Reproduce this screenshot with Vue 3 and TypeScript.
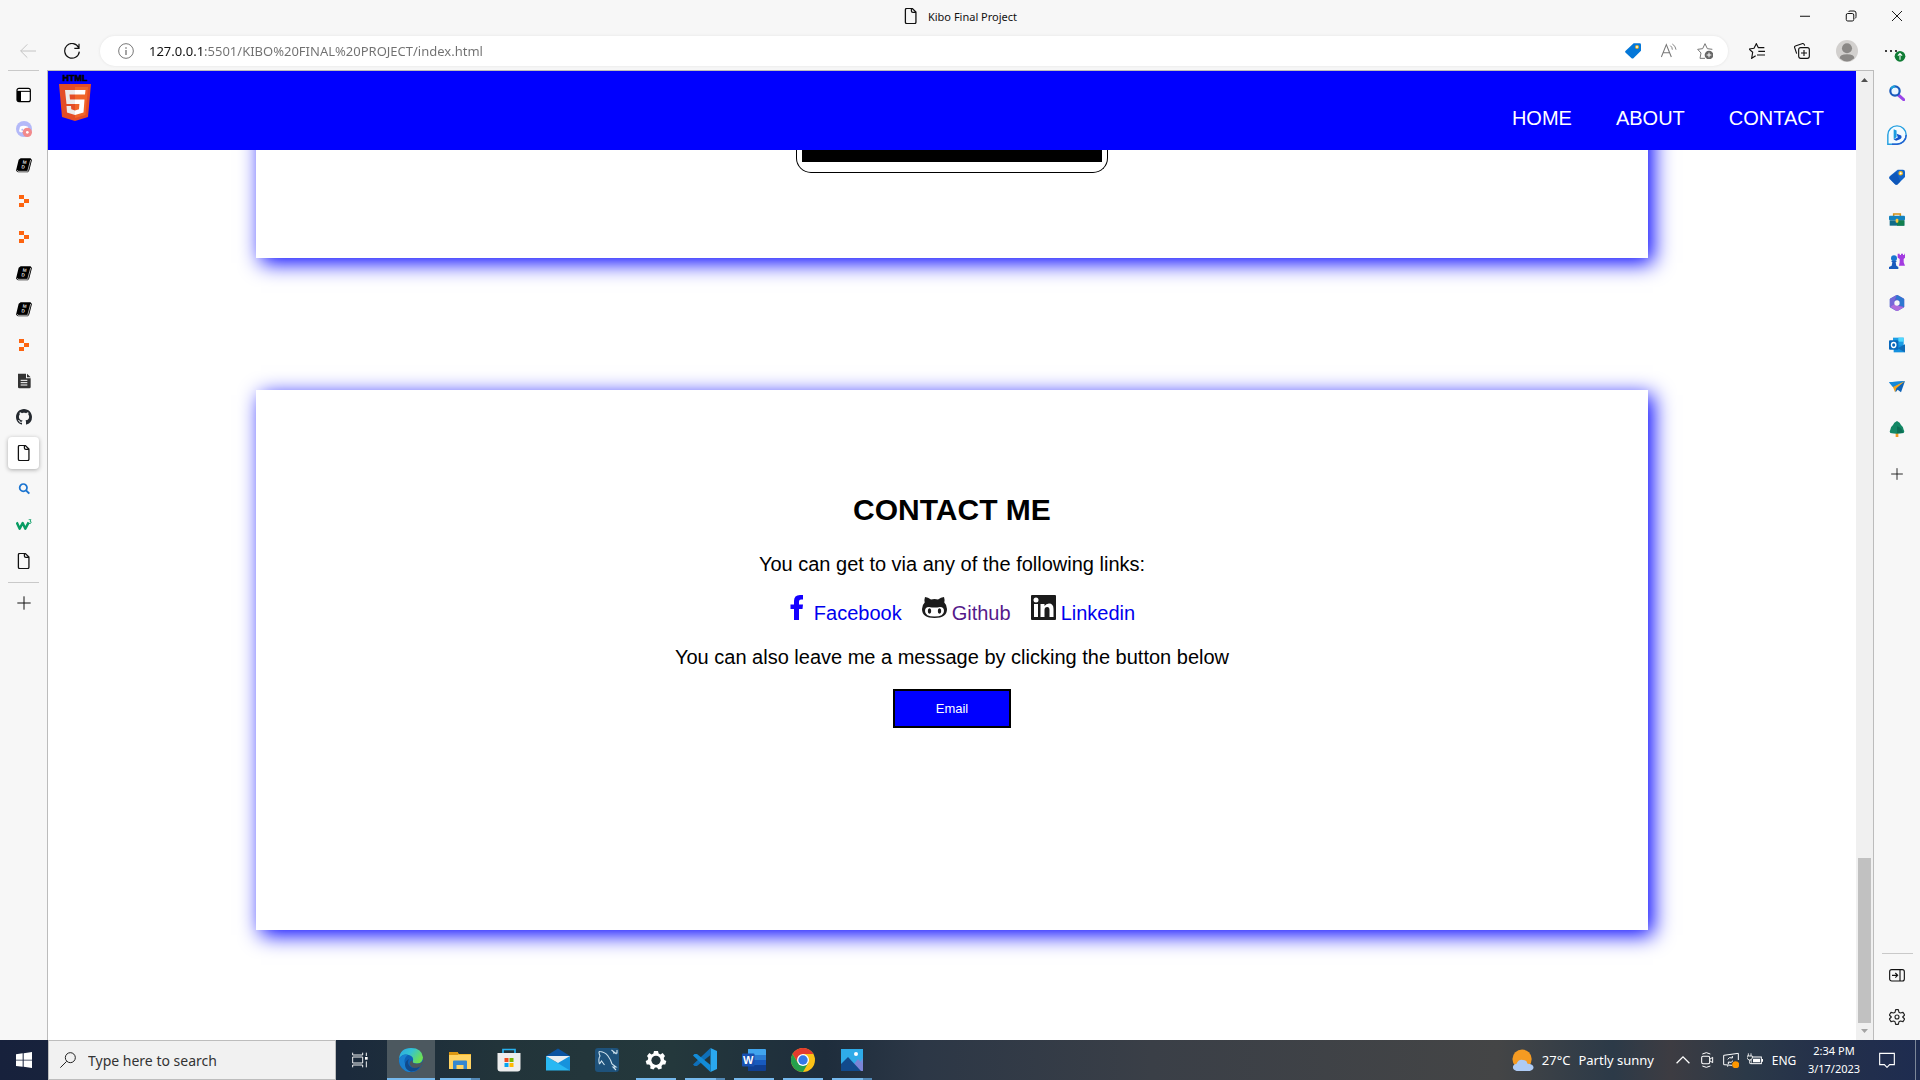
<script setup lang="ts">
import { ref } from 'vue'

interface Tile {
  label: string
  icon: string
}
interface TabTile extends Tile {
  active?: boolean
}
interface Task extends Tile {
  state?: 'active' | 'open' | 'stack'
}

const file =
  '<path d="M6.5 .5h7l5 5.500v15.500a2 2 0 0 1-2 2h-10a2 2 0 0 1-2-2v-19a2 2 0 0 1 2-2zM12.500 .5v4a2 2 0 0 0 2 2h4" transform="translate(-1.500 0) scale(1.130 1)" fill="none" stroke="#111" stroke-width="1.700"/>'
const book =
  '<path d="M7 2h15.500l-.5 1 2 1-4 16-2 3H3l-3-2.500L4 4z" fill="#000"/><path d="M1.500 19.500l1.500 2h14.500l4.500-17" fill="none" stroke="#fff" stroke-width="1"/><g fill="#ddd" font-family="Liberation Sans" font-weight="700" font-size="7"><text x="10" y="10" transform="rotate(8 12 8)">M</text><text x="8" y="17" transform="rotate(8 10 15)">D</text></g>'
const replit =
  '<path d="M4.500 3H12v6H4.500zM12 9h7.500v6H12zM4.500 15H12v6H4.500z" fill="#fd6410"/>'

const icons: Record<string, string> = {
  file,
  book,
  replit,
  panel:
    '<rect x="1.500" y="2" width="20" height="20" rx="3" fill="#fff" stroke="#000" stroke-width="1.800"/><path d="M1.500 6h6v16h-3a3 3 0 0 1-3-3z"/><path d="M2 6.500h19.500" stroke="#000" stroke-width="1.500"/>',
  discord:
    '<circle cx="12" cy="12" r="12" fill="#b4b9f8"/><path d="M6 8.500q5-3 12 0l1.500 7q-3 2.500-5 1h-5q-2 1.500-5-1z" fill="#fff"/><circle cx="9.500" cy="13" r="1.500" fill="#b4b9f8"/><circle cx="17" cy="17" r="7" fill="#f28a8c"/><circle cx="17" cy="17" r="2" fill="#fff"/>',
  doc:
    '<path d="M3 1h12v7h7v13a2 2 0 0 1-2 2H5a2 2 0 0 1-2-2zM16.500 1L22 6.500h-5.500z" fill="#333"/><path d="M7 11h10M7 14.500h10M7 18h10" stroke="#fff" stroke-width="1.500"/>',
  github:
    '<path transform="scale(1.5)" fill="#24292f" d="M8 0C3.580 0 0 3.580 0 8c0 3.540 2.290 6.530 5.470 7.590.4.070.55-.17.55-.38 0-.19-.01-.82-.01-1.490-2.010.37-2.530-.49-2.690-.94-.09-.23-.48-.94-.82-1.130-.28-.15-.68-.52-.01-.53.63-.01 1.080.58 1.230.82.720 1.210 1.870.87 2.330.66.070-.52.28-.87.510-1.070-1.780-.2-3.640-.89-3.640-3.950 0-.87.310-1.590.820-2.150-.08-.2-.36-1.020.08-2.120 0 0 .67-.21 2.200.82.640-.18 1.320-.27 2-.27s1.360.09 2 .27c1.530-1.040 2.200-.82 2.200-.82.440 1.100.16 1.920.08 2.120.510.56.820 1.270.820 2.150 0 3.070-1.870 3.750-3.650 3.950.29.25.54.73.54 1.480 0 1.070-.01 1.930-.01 2.200 0 .21.15.46.55.38A8.010 8.010 0 0 0 16 8c0-4.420-3.580-8-8-8z"/>',
  find:
    '<circle cx="11" cy="10" r="5.500" fill="none" stroke="#1b74d0" stroke-width="2.600"/><path d="M15 14l5 5" stroke="#1b74d0" stroke-width="3"/>',
  w3:
    '<path d="M1 8l4.500 9.500L10 9l4 8.500L19 8" fill="none" stroke="#089c63" stroke-width="3.700" stroke-linejoin="round"/><path d="M19 4h3.500l-1.500 2.500q2.500 0 1.500 2.500-1 1.500-3.500.5" fill="none" stroke="#089c63" stroke-width="1.200"/>',
  plus: '<path d="M12 2v20M2 12h20" stroke="#111" stroke-width="1.500"/>',
  back: '<path d="M24 12H1M11 2L1 12l10 10" fill="none" stroke="#c4c4c4" stroke-width="1.500"/>',
  reload:
    '<path d="M22 7A11 11 0 1 0 23 13M22.500 1v7h-7" fill="none" stroke="#111" stroke-width="1.800"/>',
  info:
    '<circle cx="12" cy="12" r="11" fill="none" stroke="#777" stroke-width="1.500"/><path d="M12 10.500V18M12 6.500v2" stroke="#777" stroke-width="2"/>',
  tag:
    '<path d="M13 .5h9a2 2 0 0 1 2 2v9L13 22.500a2.500 2.500 0 0 1-3.500 0l-8.500-8a2 2 0 0 1 0-3z" fill="#0477d8"/><circle cx="18" cy="6" r="2.200" fill="#fff" stroke="#e0ab1c" stroke-width="1.600"/>',
  aloud:
    '<path d="M.5 21L8 2.500 15.500 21M3.500 14.500h9" fill="none" stroke="#777" stroke-width="1.600"/><path d="M14 4q3 2 3 6M17 1.500q5 3 5.500 8.500" fill="none" stroke="#777" stroke-width="1.400"/>',
  staradd:
    '<path d="M12 23l-7.500 0 1.500-8L1 9.500l7.500-1L12 1l3.500 7.500 7.500 1" fill="none" stroke="#777" stroke-width="1.500"/><circle cx="18" cy="18" r="6.500" fill="#686868"/><path d="M18 14.500v7M14.500 18h7" stroke="#fff" stroke-width="1.500"/>',
  favs:
    '<path d="M10 19l-6 4 1.500-9L0 9l7.500-1L11 1l3 6h9M14 12.500h10M12 18h12" fill="none" stroke="#111" stroke-width="1.700"/>',
  collect:
    '<rect x="7" y="7" width="16" height="16" rx="3" fill="none" stroke="#111" stroke-width="1.700"/><path d="M15 10.500v9M10.500 15h9M4 16L1 7q-1-2 2-3l9-3q3-1 4 3" fill="none" stroke="#111" stroke-width="1.700"/>',
  person:
    '<circle cx="12" cy="12" r="12" fill="#d2d0ce"/><circle cx="12" cy="9" r="5.500" fill="#8a8886"/><path d="M4 20q0-4.500 8-4.500t8 4.500q-8 7-16 0z" fill="#8a8886"/>',
  more:
    '<g fill="#111"><circle cx="3" cy="12" r="1.600"/><circle cx="10.500" cy="12" r="1.600"/><circle cx="18" cy="12" r="1.600"/></g><circle cx="24" cy="20" r="8" fill="#107c35"/><path d="M24 25v-9M20.800 19l3.200-3.200 3.200 3.200" fill="none" stroke="#fff" stroke-width="1.600"/>',
  minimize: '<path d="M2 12.500h20" stroke="#111" stroke-width="2"/>',
  restore:
    '<rect x="2.500" y="7" width="15" height="15" rx="3" fill="none" stroke="#111" stroke-width="2"/><path d="M7 4q1-2 3-2h8q4 0 4 4v7q0 3-2 4" fill="none" stroke="#111" stroke-width="2"/>',
  close: '<path d="M2 2l20 20M22 2L2 22" stroke="#111" stroke-width="1.900"/>',
  search:
    '<path d="M14 15l8 7" stroke="#9a45e8" stroke-width="4.500" stroke-linecap="round"/><circle cx="9" cy="9" r="7" fill="#eaf6ff" stroke="#185abd" stroke-width="3.300"/><path d="M3 5.500A7 7 0 0 1 9 2" fill="none" stroke="#1ca2dc" stroke-width="3.300"/>',
  bing:
    '<path d="M1 23V12A11 11 0 1 1 12 23z" fill="#f3fbff" stroke="#249fe0" stroke-width="1.700"/><path d="M23 12A11 11 0 0 1 12 23H6" fill="none" stroke="#2460d0" stroke-width="1.700"/><path d="M8 5l3.500 1.500v8L8 17.500z" fill="#1a9de0"/><path d="M8 17.500l5-2.500-1.500-4.500 5.500 2q1.500 3-1.500 4.500L11 19z" fill="#1455cc"/>',
  coupon:
    '<path d="M13 1h8a3 3 0 0 1 3 3v8L13 23q-2 1.500-4 0L1 15q-1.500-2 0-4z" fill="#1265cc"/><path d="M0 13l11-9 6 15-5 5q-2 0-4-2z" fill="#0b4fae" opacity=".6"/><circle cx="17.500" cy="6.500" r="2.500" fill="#fff" stroke="#fbb917" stroke-width="1.800"/>',
  tools:
    '<path d="M7 8V4.500h10V8" fill="none" stroke="#d59015" stroke-width="2.300"/><rect y="7" width="24" height="7" rx="1.500" fill="#1382be"/><path d="M1 14h22v8H1z" fill="#116b87"/><path d="M12 14h11v8H12z" fill="#12804e"/><rect x="10" y="11.500" width="4" height="6" rx="1.500" fill="#ffc93b"/>',
  games:
    '<path d="M13 1h3v2h2V1h3v2h2V1h1v6l-2 2v5l2 5h-9l1-5V9l-3-2z" fill="#a33be0"/><circle cx="7.500" cy="8" r="4.500" fill="#1876d0"/><path d="M3 12h9l-2 2 1 5 3 2v3H0v-3l4-2 1-5z" fill="#185abd"/>',
  m365:
    '<path d="M12 0l10.500 6v12L12 24 1.500 18V6z" fill="#5360cf" stroke="#5360cf" stroke-width="1" stroke-linejoin="round"/><path d="M12 0l10.500 6v12.500L16 15V9l-6-4z" fill="#2e78d0"/><path d="M1.500 17.500l7-4.500 6 3.500 8 1.500L12 24.300z" fill="#b06ddd"/><path d="M1.500 6v12l7-5V8l3-7.500z" fill="#7668d8"/><circle cx="12" cy="12" r="4" fill="#f7f7f7"/>',
  outlook:
    '<path d="M6 1h16v13H6z" fill="#1c9de5"/><path d="M14 1h8v6h-8z" fill="#50d9ff"/><path d="M7 12l17 0v11H7z" fill="#1490df"/><path d="M24 11v12l-11-6z" fill="#126bb5"/><rect y="5" width="14" height="14" rx="1.500" fill="#0868bc"/><ellipse cx="7" cy="12" rx="3.300" ry="3.700" fill="none" stroke="#fff" stroke-width="2"/>',
  drop:
    '<path d="M0 5l24-2-17 10z" fill="#1e86dc"/><path d="M24 3L8 13l2 7 3-4 5 4z" fill="#0e63b8"/><path d="M0 5l24-2L6 12z" fill="#1689d8"/><path d="M24 3L6 12l3 8 2-6z" fill="#f6a51c"/>',
  tree:
    '<path d="M10 17h4v7h-4z" fill="#f29a20"/><path d="M12 0q5 2 6 6 4 3 4 7 2 2 0 5-10 2-20 0-2-2 0-5 0-4 4-7 1-4 6-6z" fill="#138765"/><path d="M12 8q8 2 9 10h-9z" fill="#0b6f54"/>',
  sidepanel:
    '<rect x="1" y="4" width="22" height="17" rx="3" fill="none" stroke="#111" stroke-width="1.700"/><path d="M16.500 4v17M4.500 12.500h8M9.500 9l3.500 3.500L9.500 16" fill="none" stroke="#111" stroke-width="1.700"/>',
  cog:
    '<path d="M10 1h4l1 4 2 1 4-1 2.500 4-3 3 3 3-2.500 4-4-1-2 1-1 4h-4l-1-4-2-1-4 1L.5 15l3-3-3-3L3 5l4 1 2-1z" fill="none" stroke="#222" stroke-width="1.700" stroke-linejoin="round"/><circle cx="12" cy="12" r="3" fill="none" stroke="#222" stroke-width="1.700"/>',
  windows:
    '<path d="M0 3.500l10-1.500v9.500H0zM11.500 1.800L24 0v11.500H11.500zM0 12.800h10v9.500L0 21zM11.500 12.800H24V24l-12.500-1.700z" fill="#fff"/>',
  lens:
    '<circle cx="15.500" cy="8.500" r="7.500" fill="none" stroke="#222" stroke-width="1.500"/><path d="M10 14L.5 23.500" stroke="#222" stroke-width="1.500"/>',
  taskview:
    '<path d="M1 1v3.500h15V1M1 23v-3.500h15V23M1 7.500h15v9H1zM21.500 1v5M21.500 14v9" fill="none" stroke="#fff" stroke-width="1.400"/><path d="M19.500 7.500h4v4h-4z" fill="#fff"/>',
  edge:
    '<defs><linearGradient id="eg" x1="0" y1="0" x2="1" y2=".5"><stop offset="0" stop-color="#2aa8e4"/><stop offset=".5" stop-color="#35c3d2"/><stop offset="1" stop-color="#6ee052"/></linearGradient></defs><circle cx="12" cy="12" r="12" fill="#0d62b7"/><path d="M0 11Q1 0 12 0q11 0 12 9.500-.5 6-6 6-5 0-4-2.500 1-4.500-4-6Q3 5 0 11z" fill="url(#eg)"/><path d="M0 11Q3 6 9 6.700q-6 5-2 11 4 5.500 9 5.500Q8 26 3 20q-3.500-4-3-9z" fill="#1a80cf"/><path d="M13.500 12q-1 4 4.500 3.800 4 0 6-2.800l0 2-3 4.500q-7 2.500-10-2.500-1.500-3 2.500-5z" fill="#4d565c"/><path d="M10 11q-2.500 4 1 7.500 4 3 10 0-3 5-9 5.200-6-2-6-7 .5-4 4-5.700z" fill="#114a8b"/>',
  explorer:
    '<path d="M1 4h8l2 2h12v15H1z" fill="#f8b82a"/><path d="M1 4h9v3H1z" fill="#dc9711"/><path d="M1 7h22v14H1z" fill="#ffd363"/><path d="M5 13.500q0-1 1-1h12q1 0 1 1v7.500h-3.500v-4h-7v4H5z" fill="#3487d1"/>',
  store:
    '<path d="M6 7V1.500h12V7" fill="none" stroke="#28b2f0" stroke-width="1.700"/><path d="M.5 5h23v15.500a3 3 0 0 1-3 3h-17a3 3 0 0 1-3-3z" fill="#eee"/><path d="M7.500 10h4v4h-4z" fill="#f04c20"/><path d="M12.500 10h4v4h-4z" fill="#7bb900"/><path d="M7.500 15h4v4h-4z" fill="#04a4ef"/><path d="M12.500 15h4v4h-4z" fill="#ffb900"/>',
  mail:
    '<path d="M0 8l12-7.500L24 8v3H0z" fill="#0a52a0"/><path d="M0 8l12 7 12-7v14.500H0z" fill="#29b8f2"/><path d="M24 8v14.500L10 14z" fill="#1792dc"/><path d="M0 8h24l-12 7z" fill="#e8edf1"/>',
  mysql:
    '<rect width="24" height="24" rx="3" fill="#1e527b"/><path d="M4.500 16Q3 11 5 8q-2-5 0-4.500 5 .5 8 4.500 3 4 4 8l4 3-3 0 3 3M4.500 16l2-3 3 4M16.500 2l5 4M18 5h4V2" fill="none" stroke="#cfe3ee" stroke-width="1.100"/>',
  gear:
    '<path d="M10 3h4l.6 2.600 1.800.8L18.700 5 21 8l-1.300 2 .6 2 2 1-1 3.500-2.500 0-1.300 1.500.3 2.500-3.300 1-1.500-2h-2l-1.500 2-3.300-1 .3-2.500-1.300-1.500-2.500 0-1-3.500 2-1 .6-2L3 8l2.300-3 2.300 1.400 1.800-.8z" fill="#fff"/><circle cx="12" cy="12.300" r="4.600" fill="#22343a"/>',
  code:
    '<path d="M17.500 0L24 3v18l-6.500 3z" fill="#2aa8ef"/><path d="M17.500 0v7L4 18l-2.500 0L0 16.500z" fill="#0f6fb8"/><path d="M17.500 24v-7L4 6 1.500 6 0 7.500z" fill="#138cd8"/>',
  word:
    '<path d="M6 1h17a1 1 0 0 1 1 1v5H6z" fill="#41a5ee"/><path d="M6 7h18v5H6z" fill="#2b7cd3"/><path d="M6 12h18v5H6z" fill="#185abd"/><path d="M6 17h18v5a1 1 0 0 1-1 1H6z" fill="#103f91"/><rect y="5.500" width="12.500" height="13" rx="1" fill="#1850b0"/><text x="6.200" y="16" text-anchor="middle" font-family="Liberation Sans" font-weight="700" font-size="11" fill="#fff">W</text>',
  chrome:
    '<circle cx="12" cy="12" r="12" fill="#fbc116"/><path d="M1.600 6A12 12 0 0 1 22.400 6H12L7 15z" fill="#e33b2e"/><path d="M1.600 6A12 12 0 0 0 12 24l5.200-9H7z" fill="#25a04c"/><circle cx="12" cy="12" r="6" fill="#fff"/><circle cx="12" cy="12" r="4.700" fill="#3478e5"/>',
  photos:
    '<path d="M1 1h22v22H1z" fill="#2fabe8"/><path d="M23 10v13H13z" fill="#6e8fdc"/><path d="M14 16l4-5 5 5v7h-9z" fill="#7b84d6"/><path d="M1 16l7-7 13 14H1z" fill="#124a8c"/><circle cx="16" cy="6" r="2" fill="#fff"/>',
  weather:
    '<circle cx="11" cy="11" r="10.500" fill="#f59b22"/><path d="M5 24q-4-1-4-4 0-3.500 4-4 2-5 7-4 4 0 5 4 6 0 6.500 4 0 3-4 4z" fill="#aecbf5"/>',
  chevron: '<path d="M1 17.500L12 6.500l11 11" fill="none" stroke="#fff" stroke-width="2.200"/>',
  meet:
    '<rect x="4" y="6.500" width="12" height="11" rx="2" fill="none" stroke="#fff" stroke-width="1.600"/><path d="M16 11l4.500-3v8L16 13M5 3q6-4 12 0M5 21q6 4 12 0" fill="none" stroke="#fff" stroke-width="1.500"/>',
  sync:
    '<path d="M14 20L1 19V5l22-3v10M7 20v2" fill="none" stroke="#fff" stroke-width="1.500"/><path d="M7 11q2-4 7-2V6M15 13q-2 4-7 2v3" fill="none" stroke="#fff" stroke-width="1.500"/><circle cx="19" cy="19" r="5.300" fill="#ff9800"/>',
  battery:
    '<rect x="6" y="7.500" width="15.500" height="10" fill="none" stroke="#fff" stroke-width="1.500"/><path d="M9 10h10.500v5.500H9zM22 10.500h2v4h-2z" fill="#fff"/><path d="M2 2v4M6 2v4M0 6h8v3q-1 3-4 3t-4-3zM4 12v5h3" fill="#26343e" stroke="#fff" stroke-width="1.300"/>',
  notice:
    '<path d="M1 2h22v17h-7l-4 4-4-4H1z" fill="none" stroke="#fff" stroke-width="1.700"/>',
}

const tabs: TabTile[] = [
  { label: 'Discord', icon: 'discord' },
  { label: 'Course notes', icon: 'book' },
  { label: 'Replit', icon: 'replit' },
  { label: 'Replit project', icon: 'replit' },
  { label: 'Lesson', icon: 'book' },
  { label: 'Assignment', icon: 'book' },
  { label: 'Replit workspace', icon: 'replit' },
  { label: 'Document', icon: 'doc' },
  { label: 'GitHub', icon: 'github' },
  { label: 'Kibo Final Project', icon: 'file', active: true },
  { label: 'Search results', icon: 'find' },
  { label: 'W3Schools', icon: 'w3' },
  { label: 'Untitled', icon: 'file' },
]

const apps: Tile[] = [
  { label: 'Search', icon: 'search' },
  { label: 'Bing', icon: 'bing' },
  { label: 'Shopping', icon: 'coupon' },
  { label: 'Tools', icon: 'tools' },
  { label: 'Games', icon: 'games' },
  { label: 'Microsoft 365', icon: 'm365' },
  { label: 'Outlook', icon: 'outlook' },
  { label: 'Drop', icon: 'drop' },
  { label: 'E-tree', icon: 'tree' },
]

const tasks: Task[] = [
  { label: 'Edge', icon: 'edge', state: 'active' },
  { label: 'File Explorer', icon: 'explorer', state: 'stack' },
  { label: 'Store', icon: 'store' },
  { label: 'Mail', icon: 'mail' },
  { label: 'MySQL Workbench', icon: 'mysql' },
  { label: 'Settings', icon: 'gear', state: 'open' },
  { label: 'Visual Studio Code', icon: 'code', state: 'stack' },
  { label: 'Word', icon: 'word', state: 'open' },
  { label: 'Chrome', icon: 'chrome', state: 'open' },
  { label: 'Photos', icon: 'photos', state: 'stack' },
]

const address = ref('127.0.0.1:5501/KIBO%20FINAL%20PROJECT/index.html')
const query = ref('')
</script>

<template>
  <div class="desktop">
    <header class="titlebar">
      <div class="title">
        <svg class="i16" viewBox="0 0 24 24" v-html="icons.file" />
        <span>Kibo Final Project</span>
      </div>
      <div class="window-controls">
        <button aria-label="Minimize"><svg class="i12" viewBox="0 0 24 24" v-html="icons.minimize" /></button>
        <button aria-label="Restore"><svg class="i12" viewBox="0 0 24 24" v-html="icons.restore" /></button>
        <button aria-label="Close"><svg class="i12" viewBox="0 0 24 24" v-html="icons.close" /></button>
      </div>
    </header>

    <div class="toolbar">
      <button class="tool history" aria-label="Back"><svg class="i16" viewBox="0 0 24 24" v-html="icons.back" /></button>
      <button class="tool history" aria-label="Refresh"><svg class="i16" viewBox="0 0 24 24" v-html="icons.reload" /></button>
      <div class="address">
        <button class="inner" aria-label="Site information"><svg class="i16" viewBox="0 0 24 24" v-html="icons.info" /></button>
        <input v-model="address" class="url" type="text" aria-label="Address" />
        <button class="inner" aria-label="Coupons"><svg class="i16" viewBox="0 0 24 24" v-html="icons.tag" /></button>
        <button class="inner" aria-label="Read aloud"><svg class="i16" viewBox="0 0 24 24" v-html="icons.aloud" /></button>
        <button class="inner" aria-label="Add to favorites"><svg class="i16" viewBox="0 0 24 24" v-html="icons.staradd" /></button>
      </div>
      <button class="tool" aria-label="Favorites"><svg class="i16" viewBox="0 0 24 24" v-html="icons.favs" /></button>
      <button class="tool" aria-label="Collections"><svg class="i16" viewBox="0 0 24 24" v-html="icons.collect" /></button>
      <button class="tool" aria-label="Profile"><svg class="i22" viewBox="0 0 24 24" v-html="icons.person" /></button>
      <button class="tool" aria-label="Settings and more"><svg class="i16 spill" viewBox="0 0 24 24" v-html="icons.more" /></button>
    </div>

    <div class="workspace">
      <aside class="tabs">
        <hr />
        <button class="tab first" aria-label="Tab actions"><svg class="i16" viewBox="0 0 24 24" v-html="icons.panel" /></button>
        <button
          v-for="tab in tabs"
          :key="tab.label"
          class="tab"
          :class="{ active: tab.active }"
          :aria-label="tab.label"
        >
          <svg class="i16" viewBox="0 0 24 24" v-html="icons[tab.icon]" />
        </button>
        <hr class="split" />
        <button class="tab" aria-label="New tab"><svg class="i16" viewBox="0 0 24 24" v-html="icons.plus" /></button>
      </aside>

      <div class="viewport">
        <main class="page">
          <nav class="nav">
            <svg class="logo" viewBox="0 0 32 48">
              <text x="16" y="7" text-anchor="middle" font-family="Liberation Sans" font-weight="700" font-size="9" stroke="#000" stroke-width=".6">HTML</text>
              <path d="M0 10h32l-3 33-13 4-13-4z" fill="#e44d26" />
              <path d="M16 13h13l-2.500 28L16 44z" fill="#f16529" />
              <path d="M6 16h10v4.500h-5.500l.5 5h5V30H7.500zM7.500 32H12l.3 3.200 3.700 1.200v4.500l-8-2.500z" fill="#ebebeb" />
              <path d="M16 16h10.500l-.5 4.500H16zM16 25.500h9.500L24.500 38.400 16 40.900v-4.500l4-1.200.4-5.200H16z" fill="#fff" />
            </svg>
            <div class="menu">
              <a href="#home">HOME</a>
              <a href="#about">ABOUT</a>
              <a href="#contact">CONTACT</a>
            </div>
          </nav>

          <section class="card project">
            <div class="frame"><div class="screen"></div></div>
          </section>

          <section id="contact" class="card contact">
            <h2>CONTACT ME</h2>
            <p>You can get to via any of the following links:</p>
            <div class="links">
              <span class="social">
                <svg viewBox="0 0 25 25"><path d="M10 25V14H6.500v-4.500H10V6q0-6 6-6h3v4.500h-2q-2 0-2 2v3h4l-.5 4.500H15v11z" fill="#1400ff" /></svg>
                <a href="#facebook">Facebook</a>
              </span>
              <span class="social">
                <svg viewBox="0 0 25 25">
                  <path d="M3 2q3 0 6 2.500 3.500-.8 7 0Q19 2 22 2q1 3 .3 5.500Q25 10 25 14q0 9-12.500 9T0 14q0-4 2.700-6.500Q2 5 3 2z" fill="#1b1b1b" />
                  <path d="M7 12q5.500 1 11 0 4 0 4 4 0 5.500-9.500 5.500T3 16q0-4 4-4z" fill="#fff" />
                  <ellipse cx="7.500" cy="16" rx="1.700" ry="2.700" fill="#1b1b1b" />
                  <ellipse cx="17.500" cy="16" rx="1.700" ry="2.700" fill="#1b1b1b" />
                </svg>
                <a href="#github" class="visited">Github</a>
              </span>
              <span class="social">
                <svg viewBox="0 0 25 25">
                  <rect width="25" height="25" rx="1" fill="#1b1b1b" />
                  <circle cx="5" cy="5" r="2.500" fill="#fff" />
                  <path d="M3 9h4v13H3zM9.500 9h4v2q1.500-2.500 4.500-2.500 4.500 0 4.500 5.500v8h-4v-7q0-3-2.300-3-2.700 0-2.700 3v7h-4z" fill="#fff" />
                </svg>
                <a href="#linkedin">Linkedin</a>
              </span>
            </div>
            <p>You can also leave me a message by clicking the button below</p>
            <button class="email">Email</button>
          </section>
        </main>
        <div class="scrollbar">
          <svg class="arrow" viewBox="0 0 17 17"><path d="M5 11l3.500-4 3.500 4z" fill="#505050" /></svg>
          <div class="thumb"></div>
          <svg class="arrow" viewBox="0 0 17 17"><path d="M5 6l3.500 4L12 6z" fill="#a3a3a3" /></svg>
        </div>
      </div>

      <aside class="apps">
        <button v-for="app in apps" :key="app.label" class="app" :aria-label="app.label">
          <svg :class="app.icon === 'bing' ? 'i20' : 'i16'" viewBox="0 0 24 24" v-html="icons[app.icon]" />
        </button>
        <button class="app add" aria-label="Customize"><svg class="i14" viewBox="0 0 24 24" v-html="icons.plus" /></button>
        <div class="spacer"></div>
        <hr />
        <button class="app" aria-label="Hide sidebar"><svg class="i16" viewBox="0 0 24 24" v-html="icons.sidepanel" /></button>
        <button class="app" aria-label="Sidebar settings"><svg class="i16" viewBox="0 0 24 24" v-html="icons.cog" /></button>
      </aside>
    </div>

    <footer class="taskbar">
      <button class="start" aria-label="Start"><svg class="i16" viewBox="0 0 24 24" v-html="icons.windows" /></button>
      <label class="search">
        <svg class="i16" viewBox="0 0 24 24" v-html="icons.lens" />
        <input v-model="query" type="text" placeholder="Type here to search" aria-label="Type here to search" />
      </label>
      <button class="start" aria-label="Task view"><svg class="i16" viewBox="0 0 24 24" v-html="icons.taskview" /></button>
      <div class="tasks">
        <button v-for="task in tasks" :key="task.label" class="task" :class="task.state" :aria-label="task.label">
          <svg class="i24" viewBox="0 0 24 24" v-html="icons[task.icon]" />
        </button>
      </div>
      <div class="tray">
        <button class="weather">
          <svg class="i22" viewBox="0 0 24 24" v-html="icons.weather" />
          <span>27°C</span>
          <span>Partly sunny</span>
        </button>
        <button class="mini" aria-label="Show hidden icons"><svg class="i14" viewBox="0 0 24 24" v-html="icons.chevron" /></button>
        <button class="mini" aria-label="Meet now"><svg class="i16" viewBox="0 0 24 24" v-html="icons.meet" /></button>
        <button class="mini" aria-label="Updates"><svg class="i16" viewBox="0 0 24 24" v-html="icons.sync" /></button>
        <button class="mini" aria-label="Battery"><svg class="i16" viewBox="0 0 24 24" v-html="icons.battery" /></button>
        <button class="lang">ENG</button>
        <button class="clock"><span>2:34 PM</span><span>3/17/2023</span></button>
        <button class="notice" aria-label="Notifications"><svg class="i16" viewBox="0 0 24 24" v-html="icons.notice" /></button>
      </div>
    </footer>
  </div>
</template>

<style>
body {
  margin: 0;
}
</style>

<style scoped>
* {
  box-sizing: border-box;
}
.desktop {
  display: flex;
  flex-direction: column;
  height: 100vh;
  background: #f7f7f7;
  font-family: 'Noto Sans', 'Open Sans', sans-serif;
  font-size: 11px;
  color: #111;
}
button {
  display: flex;
  align-items: center;
  justify-content: center;
  padding: 0;
  border: 0;
  background: none;
  font: inherit;
  color: inherit;
}
svg {
  display: block;
  flex: none;
}
hr {
  width: 31px;
  height: 1px;
  margin: 0;
  border: 0;
  background: #c9c9c9;
  flex: none;
}
.i12 { width: 12px; height: 12px; }
.i14 { width: 14px; height: 14px; }
.i16 { width: 16px; height: 16px; }
.i20 { width: 20px; height: 20px; }
.i22 { width: 22px; height: 22px; }
.i24 { width: 24px; height: 24px; }
.spill { overflow: visible; }

.titlebar {
  display: grid;
  grid-template-columns: 1fr auto 1fr;
  height: 32px;
  flex: none;
}
.title {
  grid-column: 2;
  display: flex;
  align-items: center;
  gap: 9px;
}
.window-controls {
  display: flex;
  justify-content: flex-end;
}
.window-controls button {
  width: 46px;
}

.toolbar {
  display: flex;
  align-items: center;
  height: 38px;
  padding: 0 6px;
  flex: none;
}
.tool {
  width: 45px;
  height: 30px;
}
.tool.history {
  width: 44px;
}
.address {
  display: flex;
  align-items: center;
  flex: 1;
  height: 30px;
  margin: 0 6px;
  padding: 0 5px 0 8px;
  border-radius: 15px;
  background: #fff;
  box-shadow: 0 0 3px #e2e2e2;
}
.inner {
  width: 36px;
  height: 30px;
}
.url {
  flex: 1;
  min-width: 0;
  height: 30px;
  padding: 0 0 0 5px;
  border: 0;
  outline: 0;
  font: 13px 'Noto Sans', 'Open Sans', sans-serif;
  background: linear-gradient(90deg, #111 58px, #707070 58px);
  background-clip: text;
  -webkit-text-fill-color: transparent;
}

.workspace {
  display: flex;
  flex: 1;
  min-height: 0;
}
.tabs,
.apps {
  display: flex;
  flex-direction: column;
  align-items: center;
  flex: none;
}
.tabs {
  width: 47px;
}
.tab {
  width: 31px;
  height: 32px;
  margin: 2px 0;
  border-radius: 4px;
  flex: none;
}
.tab.first {
  margin: 8px 0 0;
}
.split {
  margin: 3px 0 2px;
}
.tab.active {
  background: #fff;
  box-shadow: 0 1px 4px #aaa;
}
.apps {
  width: 46px;
  padding: 2px 0;
}
.app {
  width: 46px;
  height: 42px;
  flex: none;
}
.app.add {
  height: 48px;
}
.spacer {
  flex: 1;
}

.viewport {
  display: flex;
  flex: 1;
  min-width: 0;
  border: 1px solid #bcbcbc;
  border-bottom: 0;
  background: #fff;
}
.page {
  flex: 1;
  min-width: 0;
  overflow: hidden;
  font-family: 'Liberation Sans', Arial, sans-serif;
  font-size: 20px;
  line-height: 24px;
  color: #000;
}
.nav {
  position: relative;
  z-index: 1;
  display: flex;
  justify-content: space-between;
  align-items: flex-start;
  height: 79px;
  padding: 3px 32px 0 11px;
  background: #00f;
}
.logo {
  width: 32px;
  height: 48px;
}
.menu {
  display: flex;
  gap: 44px;
  padding-top: 32px;
}
.menu a {
  color: #fff;
  text-decoration: none;
}
.card {
  width: 77%;
  margin: 0 auto 132px;
  background: #fff;
  box-shadow: 5px 5px 20px #00f;
}
.project {
  height: 168px;
  margin-top: -60px;
  padding-top: 60px;
}
.frame {
  width: 312px;
  margin: 0 auto;
  padding: 0 5px 10px;
  border: 1px solid #000;
  border-top: 0;
  border-radius: 0 0 15px 15px;
}
.screen {
  height: 12px;
  background: #000;
}
.contact {
  display: flex;
  flex-direction: column;
  align-items: center;
  gap: 20px;
  height: 540px;
  margin-bottom: 0;
  padding-top: 100px;
}
.contact h2 {
  margin: 0 0 2px;
  font-size: 30px;
  line-height: 40px;
}
.contact p {
  margin: 0;
}
.links {
  display: flex;
  gap: 20px;
  height: 29px;
  padding-left: 15px;
}
.social {
  display: flex;
  align-items: flex-end;
  gap: 5px;
}
.social svg {
  width: 25px;
  height: 25px;
  margin-bottom: 5px;
}
.social a {
  color: #00e;
  text-decoration: none;
}
.social .visited {
  color: #551a8b;
}
.email {
  width: 118px;
  height: 39px;
  border: 2px solid #000;
  background: #00f;
  color: #fff;
  font-size: 13px;
}
.scrollbar {
  display: flex;
  flex-direction: column;
  align-items: center;
  width: 17px;
  background: #f0f0f0;
  flex: none;
}
.arrow {
  width: 17px;
  height: 17px;
}
.thumb {
  width: 13px;
  height: 165px;
  margin-top: auto;
  background: #c1c1c1;
}

.taskbar {
  display: flex;
  height: 40px;
  flex: none;
  color: #fff;
  background: linear-gradient(90deg, #17213c 0, #1b2a3c 18%, #22343a 26%, #24383c 35%, #1e2d3c 43%, #2c3746 48%, #3a3f47 60%, #444546 78%, #2c3a48 84%, #3d3c42 87%, #2b3948 91%, #24304a 95%, #1e2c50 100%);
}
.start {
  width: 48px;
}
.search {
  display: flex;
  align-items: center;
  width: 288px;
  padding-left: 11px;
  gap: 12px;
  border: 1px solid #bdbdbd;
  background: #f1f1f1;
}
.search input {
  flex: 1;
  min-width: 0;
  padding: 0;
  border: 0;
  outline: 0;
  background: none;
  font: 14px 'Noto Sans', 'Open Sans', sans-serif;
  color: #333;
}
.search input::placeholder {
  color: #333;
  opacity: 1;
}
.tasks {
  display: flex;
  gap: 1px;
  margin-left: 3px;
}
.task {
  width: 48px;
  background: no-repeat bottom / 40px 2px;
}
.task.active {
  background-color: #4c585f;
  background-image: linear-gradient(#76b9ed, #76b9ed);
  background-size: 48px 2px;
}
.task.open {
  background-image: linear-gradient(#76b9ed, #76b9ed);
}
.task.stack {
  background-image: linear-gradient(90deg, #76b9ed 31px, #5288b5 31px);
}
.tray {
  display: flex;
  margin-left: auto;
  padding-right: 4px;
}
.weather {
  gap: 8px;
  margin-right: 17px;
  font-size: 13px;
}
.mini {
  width: 24px;
}
.lang {
  width: 34px;
  font-size: 12px;
}
.clock {
  flex-direction: column;
  width: 66px;
  line-height: 18px;
}
.notice {
  width: 49px;
  padding-right: 8px;
  border-right: 1px solid #7c8798;
}
</style>
